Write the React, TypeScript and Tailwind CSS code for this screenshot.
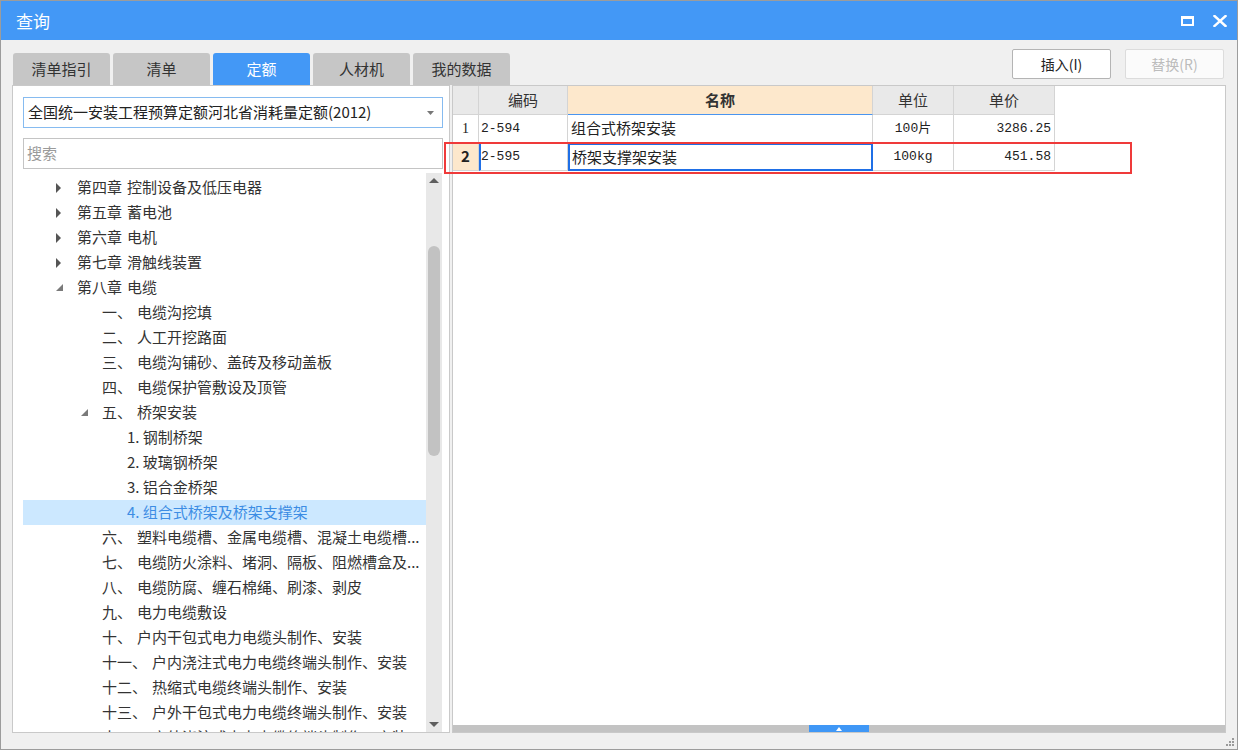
const cjk = "font-['Noto_Sans_CJK_SC',sans-serif]";
const mono = "font-['Liberation_Mono','Noto_Sans_CJK_SC',monospace]";

type Node = {
  level: 1 | 2 | 3;
  prefix?: string;
  text: string;
  state?: "open" | "closed";
  selected?: boolean;
};

const tree: Node[] = [
  { level: 1, prefix: "第四章", text: "控制设备及低压电器", state: "closed" },
  { level: 1, prefix: "第五章", text: "蓄电池", state: "closed" },
  { level: 1, prefix: "第六章", text: "电机", state: "closed" },
  { level: 1, prefix: "第七章", text: "滑触线装置", state: "closed" },
  { level: 1, prefix: "第八章", text: "电缆", state: "open" },
  { level: 2, prefix: "一、", text: "电缆沟挖填" },
  { level: 2, prefix: "二、", text: "人工开挖路面" },
  { level: 2, prefix: "三、", text: "电缆沟铺砂、盖砖及移动盖板" },
  { level: 2, prefix: "四、", text: "电缆保护管敷设及顶管" },
  { level: 2, prefix: "五、", text: "桥架安装", state: "open" },
  { level: 3, text: "1. 钢制桥架" },
  { level: 3, text: "2. 玻璃钢桥架" },
  { level: 3, text: "3. 铝合金桥架" },
  { level: 3, text: "4. 组合式桥架及桥架支撑架", selected: true },
  { level: 2, prefix: "六、", text: "塑料电缆槽、金属电缆槽、混凝土电缆槽..." },
  { level: 2, prefix: "七、", text: "电缆防火涂料、堵洞、隔板、阻燃槽盒及..." },
  { level: 2, prefix: "八、", text: "电缆防腐、缠石棉绳、刷漆、剥皮" },
  { level: 2, prefix: "九、", text: "电力电缆敷设" },
  { level: 2, prefix: "十、", text: "户内干包式电力电缆头制作、安装" },
  { level: 2, prefix: "十一、", text: "户内浇注式电力电缆终端头制作、安装" },
  { level: 2, prefix: "十二、", text: "热缩式电缆终端头制作、安装" },
  { level: 2, prefix: "十三、", text: "户外干包式电力电缆终端头制作、安装" },
  { level: 2, prefix: "十四、", text: "户外浇注式电力电缆终端头制作、安装" },
];

const indent = { 1: "pl-[33px]", 2: "pl-[58px]", 3: "pl-[83px]" };

function Expander({ state }: { state?: "open" | "closed" }) {
  if (state === "closed")
    return (
      <svg width="6" height="10" viewBox="0 0 6 10">
        <polygon points="0,0 5,5 0,10" fill="#555" />
      </svg>
    );
  if (state === "open")
    return (
      <svg width="8" height="8" viewBox="0 0 8 8">
        <polygon points="7,0 7,7 0,7" fill="#7a7a7a" />
      </svg>
    );
  return null;
}

function TreeRow({ n }: { n: Node }) {
  return (
    <div
      className={`flex h-[25px] items-center whitespace-nowrap text-[15px] ${indent[n.level]} ${
        n.selected ? "bg-[#cce8ff] text-[#3d8de4]" : "text-[#333]"
      }`}
    >
      <span className="flex w-[21px] shrink-0 items-center">
        <Expander state={n.state} />
      </span>
      <span>
        {n.prefix}
        {n.prefix ? <span className="ml-[5px]">{n.text}</span> : n.text}
      </span>
    </div>
  );
}

const cols = ["w-[89px]", "w-[305px]", "w-[81px]", "w-[101px]"];

export default function App() {
  return (
    <div className={`relative flex h-[750px] w-[1238px] flex-col border border-[#9c9c9c] bg-[#f0f0f0] ${cjk}`}>
      {/* title bar */}
      <div className="flex h-[39px] shrink-0 items-center bg-[#4398f6] pl-[15px] pr-[10px] text-white">
        <span className="text-[17px]">查询</span>
        <div className="ml-auto flex items-center gap-[19px]">
          <svg width="13" height="10" viewBox="0 0 13 10">
            <rect x="1" y="1.5" width="11" height="7.5" fill="none" stroke="#fff" strokeWidth="2" />
            <rect x="0" y="0" width="13" height="3" fill="#fff" />
          </svg>
          <svg width="14" height="12" viewBox="0 0 14 12">
            <path d="M1.5 1 L12.5 11 M12.5 1 L1.5 11" stroke="#fff" strokeWidth="2.4" strokeLinecap="square" />
          </svg>
        </div>
      </div>

      <div className="flex flex-1 flex-col pl-[11px] pr-[11px]">
        {/* tabs + buttons */}
        <div className="flex h-[45px] shrink-0 items-end">
          <div className="ml-[1px] flex gap-[3px]">
            {["清单指引", "清单", "定额", "人材机", "我的数据"].map((t) => (
              <div
                key={t}
                className={`flex h-[32px] w-[97px] items-center justify-center rounded-t-[3px] text-[15px] ${
                  t === "定额" ? "bg-[#4398f6] text-white" : "bg-[#c6c6c6] text-[#333]"
                }`}
              >
                {t}
              </div>
            ))}
          </div>
          <div className="mb-[6px] ml-auto mr-[2px] flex gap-[14px]">
            <button className="h-[30px] w-[99px] rounded-[2px] border border-[#b4b4b4] bg-white text-[14px] text-[#222]">
              插入(I)
            </button>
            <button className="h-[30px] w-[99px] rounded-[2px] border border-[#dcdcdc] bg-[#fbfbfb] text-[14px] text-[#bcbcbc]">
              替换(R)
            </button>
          </div>
        </div>

        {/* panels */}
        <div className="flex h-[648px] gap-[2px]">
          {/* left */}
          <div className="flex w-[438px] flex-col border border-[#c9c9c9] bg-white pl-[10px] pr-[5px] pt-[11px]">
            <div className="flex h-[31px] w-[420px] items-center border border-[#86bbf0] pl-[4px] pr-[8px] text-[15px] text-[#222]">
              <span>全国统一安装工程预算定额河北省消耗量定额(2012)</span>
              <svg className="ml-auto" width="7" height="4" viewBox="0 0 7 4">
                <polygon points="0,0 7,0 3.5,4" fill="#777" />
              </svg>
            </div>
            <div className="mt-[10px] flex h-[31px] w-[420px] items-center border border-[#c4c4c4] pl-[3px] text-[15px] text-[#9a9a9a]">
              搜索
            </div>
            <div className="mt-[4px] flex min-h-0 w-[419px] flex-1">
              <div className="min-w-0 flex-1 overflow-hidden pt-[2px]">
                {tree.map((n, i) => (
                  <TreeRow key={i} n={n} />
                ))}
              </div>
              <div className="flex w-[16px] shrink-0 flex-col items-center bg-[#e8e8e8]">
                <svg className="mt-[5px]" width="10" height="5" viewBox="0 0 10 5">
                  <polygon points="0,5 10,5 5,0" fill="#5e5e5e" />
                </svg>
                <div className="mt-[63px] h-[210px] w-[12px] rounded-full bg-[#c2c2c2]" />
                <svg className="mb-[5px] mt-auto" width="10" height="5" viewBox="0 0 10 5">
                  <polygon points="0,0 10,0 5,5" fill="#5e5e5e" />
                </svg>
              </div>
            </div>
          </div>

          {/* right */}
          <div className="flex flex-1 flex-col border border-[#c9c9c9] bg-white">
            <div className="flex-1 text-[#222]">
              <div className="flex h-[29px] text-[15px] text-[#333]">
                <div className="w-[26px] border-b border-r border-[#d4d4d4] bg-[#e9e9e9]" />
                <div className={`${cols[0]} flex items-center justify-center border-b border-r border-[#d4d4d4] bg-[#e9e9e9]`}>编码</div>
                <div className={`${cols[1]} flex items-center justify-center border-b border-r border-[#d4d4d4] border-b-[#4a95ef] bg-[#fde8cc] font-bold`}>名称</div>
                <div className={`${cols[2]} flex items-center justify-center border-b border-r border-[#d4d4d4] bg-[#e9e9e9]`}>单位</div>
                <div className={`${cols[3]} flex items-center justify-center border-b border-r border-[#d4d4d4] bg-[#e9e9e9]`}>单价</div>
              </div>
              <div className="flex h-[28px]">
                <div className="flex w-[26px] items-center justify-center border-b border-r border-[#d4d4d4] font-['Liberation_Serif',serif] text-[14px]">1</div>
                <div className={`${cols[0]} flex items-center border-b border-r border-[#d4d4d4] pl-[2px] ${mono} text-[13px]`}>2-594</div>
                <div className={`${cols[1]} flex items-center border-b border-r border-[#d4d4d4] pl-[3px] text-[15px]`}>组合式桥架安装</div>
                <div className={`${cols[2]} flex items-center justify-center border-b border-r border-[#d4d4d4] ${mono} text-[13px]`}>100片</div>
                <div className={`${cols[3]} flex items-center justify-end border-b border-r border-[#d4d4d4] pr-[3px] ${mono} text-[13px]`}>3286.25</div>
              </div>
              <div className="flex h-[28px]">
                <div className="flex w-[26px] items-center justify-center border-b border-r border-[#d4d4d4] bg-[#fde8cc] text-[15px] font-bold">2</div>
                <div className={`${cols[0]} flex items-center border-b border-l-2 border-r border-[#d4d4d4] border-l-[#1f6fe6] ${mono} text-[13px]`}>2-595</div>
                <div className={`${cols[1]} flex items-center border-2 border-[#1f6fe6] pl-[2px] text-[15px]`}>桥架支撑架安装</div>
                <div className={`${cols[2]} flex items-center justify-center border-b border-r border-[#d4d4d4] ${mono} text-[13px]`}>100kg</div>
                <div className={`${cols[3]} flex items-center justify-end border-b border-r border-[#d4d4d4] pr-[3px] ${mono} text-[13px]`}>451.58</div>
              </div>
            </div>
            <div className="flex h-[7px] shrink-0 justify-center bg-[#c3c3c3]">
              <div className="flex w-[60px] items-center justify-center bg-[#3f97f6]">
                <svg width="6" height="4" viewBox="0 0 6 4">
                  <polygon points="0,4 6,4 3,0" fill="#fff" />
                </svg>
              </div>
            </div>
          </div>
        </div>
      </div>

      {/* annotation box */}
      <div className="absolute left-[443px] top-[141px] h-[32px] w-[688px] border-2 border-[#ef3a3a]" />

      {/* resize grip */}
      <svg className="absolute bottom-[3px] right-[3px]" width="8" height="8" viewBox="0 0 8 8">
        <rect x="6" y="0" width="2" height="2" fill="#9a9a9a" />
        <rect x="3" y="3" width="2" height="2" fill="#9a9a9a" />
        <rect x="6" y="3" width="2" height="2" fill="#9a9a9a" />
        <rect x="0" y="6" width="2" height="2" fill="#9a9a9a" />
        <rect x="3" y="6" width="2" height="2" fill="#9a9a9a" />
        <rect x="6" y="6" width="2" height="2" fill="#9a9a9a" />
      </svg>
    </div>
  );
}
